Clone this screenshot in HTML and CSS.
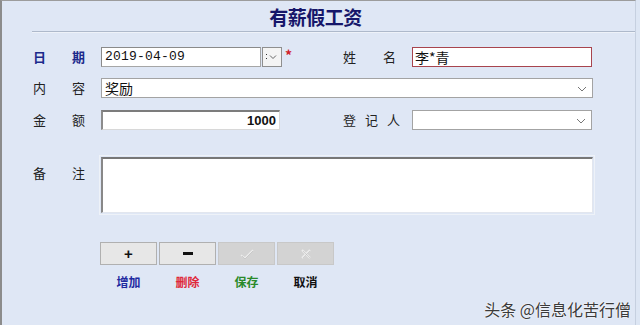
FILE: index.html
```html
<!DOCTYPE html>
<html lang="zh">
<head>
<meta charset="utf-8">
<link rel="stylesheet" href="styles.css">
</head>
<body>
<div class="window">
  <div class="title">有薪假工资</div>
  <div class="rule"></div>
  <div class="form">
    <div class="row r1">
      <div class="cell-left">
        <div class="lbl blue"><span>日</span><span>期</span></div>
        <div class="field date">2019-04-09</div>
        <div class="dbtn"><svg width="18" height="17" viewBox="0 0 18 17"><rect x="3" y="6" width="1" height="1" fill="#333"/><rect x="3" y="10" width="1" height="1" fill="#333"/><path d="M7 7.5 L10 10.5 L13 7.5" fill="none" stroke="#666" stroke-width="1"/></svg></div>
        <span class="star">*</span>
      </div>
      <div class="lbl rl"><span>姓</span><span>名</span></div>
      <div class="field name">李*青</div>
    </div>
    <div class="row r2">
      <div class="lbl"><span>内</span><span>容</span></div>
      <div class="field select wide">奖励<svg class="chev" width="10" height="6" viewBox="0 0 10 6"><path d="M1 1 L5 5 L9 1" fill="none" stroke="#777" stroke-width="1"/></svg></div>
    </div>
    <div class="row r3">
      <div class="cell-left">
        <div class="lbl"><span>金</span><span>额</span></div>
        <div class="field amount">1000</div>
      </div>
      <div class="lbl rl rl3"><span>登</span><span>记</span><span>人</span></div>
      <div class="field select narrow"><svg class="chev" width="10" height="6" viewBox="0 0 10 6"><path d="M1 1 L5 5 L9 1" fill="none" stroke="#777" stroke-width="1"/></svg></div>
    </div>
    <div class="row r4">
      <div class="lbl top"><span>备</span><span>注</span></div>
      <div class="memo"></div>
    </div>
    <div class="actions">
      <div class="act">
        <div class="btn"><span class="plus">+</span></div>
        <div class="cap c-blue">增加</div>
      </div>
      <div class="act">
        <div class="btn"><span class="minus"></span></div>
        <div class="cap c-red">删除</div>
      </div>
      <div class="act">
        <div class="btn off"><svg width="14" height="12" viewBox="0 0 14 12"><path d="M1 7 L5 10 L13 2" fill="none" stroke="#ececec" stroke-width="1.5"/><path d="M2 8 L5 11 L13 3" fill="none" stroke="#bdbdbd" stroke-width="0.7"/></svg></div>
        <div class="cap c-green">保存</div>
      </div>
      <div class="act">
        <div class="btn off"><svg width="12" height="12" viewBox="0 0 12 12"><path d="M2 2 L10 10 M10 2 L2 10" fill="none" stroke="#ececec" stroke-width="2"/><path d="M3 3 L10 10 M10 3 L3 10" fill="none" stroke="#bdbdbd" stroke-width="0.6"/></svg></div>
        <div class="cap c-black">取消</div>
      </div>
    </div>
  </div>
  <div class="watermark">头条 @信息化苦行僧</div>
</div>
</body>
</html>
```
FILE: styles.css
```css
html, body {
  margin: 0;
  padding: 0;
  background: #dde6f4;
}
body {
  font-family: "Noto Sans CJK SC", "Noto Sans", sans-serif;
}
.window {
  position: relative;
  box-sizing: border-box;
  width: 636px;
  height: 325px;
  background: #dfe7f5;
  border-left: 2px solid #8c8c8c;
  border-top: 1px solid #9c9c9c;
  border-right: 1px solid #c6d0e0;
}
.title {
  height: 30px;
  line-height: 30px;
  padding-top: 1px;
  box-sizing: border-box;
  text-align: center;
  padding-right: 6px;
  font-size: 19px;
  font-weight: 700;
  color: #16166a;
  letter-spacing: -0.5px;
}
.rule {
  margin-left: 30px;
  height: 1px;
  background: #aeb9cb;
  border-bottom: 1px solid #eef2f9;
}
.form {
  padding-left: 31px;
  padding-top: 14px;
}
.row {
  display: flex;
  align-items: center;
  height: 20px;
}
.r2 { margin-top: 11px; }
.r3 { margin-top: 12px; }
.r4 {
  margin-top: 27px;
  height: 56px;
  align-items: flex-start;
}
.cell-left {
  display: flex;
  align-items: center;
  width: 310px;
}
.lbl {
  display: flex;
  justify-content: space-between;
  width: 52px;
  margin-right: 16px;
  font-size: 13px;
  line-height: 20px;
  color: #222;
}
.lbl.blue {
  color: #1c2a8c;
  font-weight: 700;
}
.lbl.rl { width: 53px; }
.lbl.rl3 { width: 57px; margin-right: 12px; }
.lbl.top { margin-top: 6px; }
.field {
  box-sizing: border-box;
  height: 20px;
  background: #fff;
  border: 1px solid #a6a6a6;
  font-size: 13px;
  line-height: 18px;
  padding: 0 3px;
  color: #111;
  white-space: nowrap;
}
.date {
  width: 160px;
  font-family: "Liberation Mono", monospace;
  font-size: 13px;
  letter-spacing: 0.2px;
  border-top-color: #8a8a8a;
  border-left-color: #8a8a8a;
}
.dbtn {
  box-sizing: border-box;
  width: 20px;
  height: 20px;
  margin-left: 1px;
  border: 1px solid #8f8f8f;
  background: #f4f4f4;
  display: flex;
}
.star {
  color: #d0202a;
  font-size: 14px;
  font-weight: 700;
  margin-left: 3px;
  margin-top: -4px;
}
.name {
  width: 180px;
  border: 1px solid #a8444e;
  font-size: 14px;
  padding-left: 2px;
}
.select {
  position: relative;
  font-size: 14px;
  border-color: #a3a3a3;
}
.wide { width: 492px; }
.narrow { width: 180px; }
.chev {
  position: absolute;
  right: 5px;
  top: 7px;
}
.amount {
  width: 179px;
  text-align: right;
  font-family: "Liberation Sans", sans-serif;
  font-weight: 700;
  font-size: 13px;
  border-top: 2px solid #7c7c7c;
  border-left: 2px solid #8c8c8c;
  border-right-color: #d8d8d8;
  border-bottom-color: #d8d8d8;
  line-height: 17px;
}
.memo {
  box-sizing: border-box;
  width: 492px;
  height: 56px;
  background: #fff;
  border-top: 2px solid #777;
  border-left: 2px solid #888;
  border-right: 1px solid #e2e6ee;
  border-bottom: 1px solid #e2e6ee;
  outline: 1px solid #eef2f8;
  outline-offset: 1px;
}
.actions {
  display: flex;
  gap: 2px;
  margin-left: 67px;
  margin-top: 29px;
}
.act {
  display: flex;
  flex-direction: column;
  align-items: center;
  width: 57px;
}
.btn {
  box-sizing: border-box;
  width: 57px;
  height: 23px;
  background: #e7e7e7;
  border: 1px solid #b0b0b0;
  display: flex;
  align-items: center;
  justify-content: center;
}
.btn.off {
  background: #d3d3d3;
  border-color: #c8c8c8;
}
.plus {
  font-family: "Liberation Sans", sans-serif;
  font-weight: 700;
  font-size: 15px;
  line-height: 15px;
  color: #111;
}
.minus {
  display: block;
  width: 10px;
  height: 3px;
  background: #111;
}
.cap {
  margin-top: 10px;
  font-size: 12px;
  line-height: 13px;
  font-weight: 700;
}
.c-blue { color: #1e2aa0; }
.c-red { color: #e0283a; }
.c-green { color: #2a8a2a; }
.c-black { color: #111; }
.watermark {
  position: absolute;
  right: 4px;
  top: 298px;
  font-size: 16px;
  line-height: 20px;
  color: #3a3a3a;
  text-shadow: 0 0 2px #fff, 0 0 1px #fff;
}
```
